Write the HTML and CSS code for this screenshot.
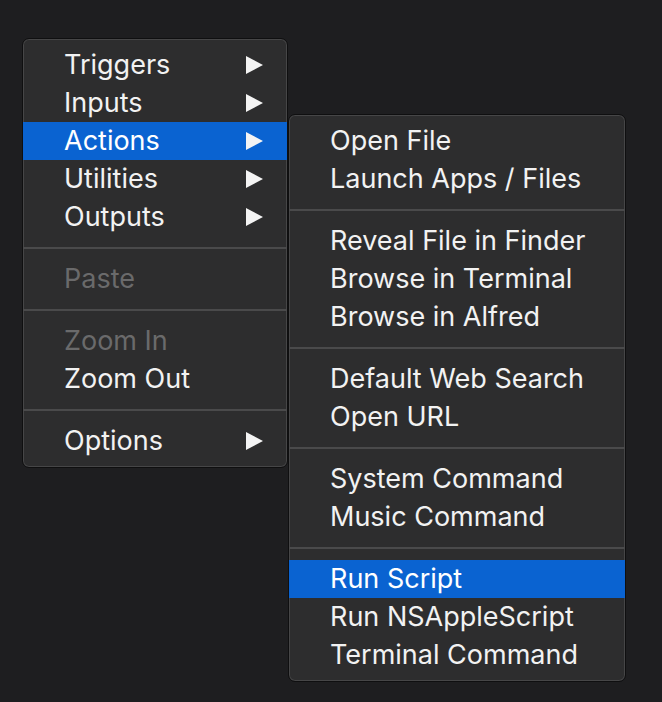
FILE: index.html
```html
<!DOCTYPE html>
<html lang="en">
<head>
    <meta charset="UTF-8">
    <meta name="viewport" content="width=device-width, initial-scale=1.0">
    <title>Context Menu</title>
    <link rel="stylesheet" href="styles.css">
</head>
<body>
    <div class="menus">
        <div class="menu main">
            <div class="item">Triggers <span class="arrow"></span></div>
            <div class="item">Inputs <span class="arrow"></span></div>
            <div class="item selected">Actions <span class="arrow"></span></div>
            <div class="item">Utilities <span class="arrow"></span></div>
            <div class="item">Outputs <span class="arrow"></span></div>
            <div class="sep"></div>
            <div class="item disabled">Paste</div>
            <div class="sep"></div>
            <div class="item disabled">Zoom In</div>
            <div class="item">Zoom Out</div>
            <div class="sep"></div>
            <div class="item">Options <span class="arrow"></span></div>
        </div>

        <div class="menu sub">
            <div class="item">Open File</div>
            <div class="item">Launch Apps / Files</div>
            <div class="sep"></div>
            <div class="item">Reveal File in Finder</div>
            <div class="item">Browse in Terminal</div>
            <div class="item">Browse in Alfred</div>
            <div class="sep"></div>
            <div class="item">Default Web Search</div>
            <div class="item">Open URL</div>
            <div class="sep"></div>
            <div class="item">System Command</div>
            <div class="item">Music Command</div>
            <div class="sep"></div>
            <div class="item selected">Run Script</div>
            <div class="item">Run NSAppleScript</div>
            <div class="item">Terminal Command</div>
        </div>
    </div>
</body>
</html>
```

FILE: styles.css
```css
body {
    margin: 0;
    background-color: #1e1e20;
    font-family: 'Inter', 'Liberation Sans', sans-serif;
    color: #f2f2f2;
}

.menus {
    display: flex;
    align-items: flex-start;
    padding: 38px 0 0 22px;
}

.menu {
    background-color: #2d2d2e;
    border: 1px solid #0f0f10;
    border-radius: 7px;
    box-shadow: inset 0 0 0 1px #464647;
    padding: 7px 0;
}

.main {
    width: 264px;
}

.sub {
    width: 336px;
    margin-top: 76px;
}

.item {
    height: 38px;
    display: flex;
    align-items: center;
    justify-content: space-between;
    padding: 0 24px 0 41px;
    font-size: 27px;
    line-height: 1;
    padding-bottom: 2px;
    box-sizing: border-box;
    white-space: nowrap;
}

.item.selected {
    background-color: #0a63d1;
    color: #fff;
}

.item.disabled { color: #6a6a6b; }

/* solid right-pointing triangle */
.arrow {
    width: 0;
    height: 0;
    margin-top: 2px;
    border-top: 9px solid transparent;
    border-bottom: 9px solid transparent;
    border-left: 17px solid #f4f4f4;
}

.sep {
    height: 2px;
    margin: 11px 0;
    background-color: #4a4a4b;
}
```
